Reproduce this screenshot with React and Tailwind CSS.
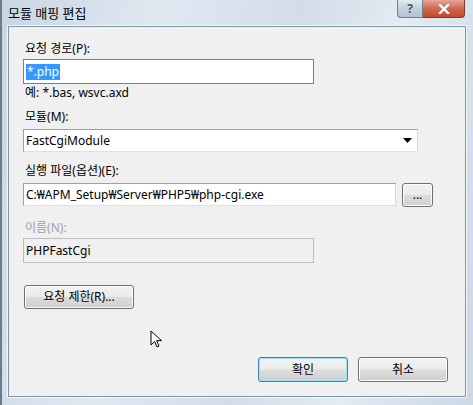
import React from "react";

const font = { fontFamily: '"Noto Sans", "Noto Sans CJK KR", sans-serif' };

function Btn({ children, className = "", focused = false }) {
  return (
    <div
      className={
        "flex items-center justify-center rounded-[3px] border text-[12px] text-black " +
        (focused
          ? "border-[#3c7fb1] shadow-[inset_0_0_0_1px_#9ee3fb] "
          : "border-[#707070] shadow-[inset_0_0_0_1px_#fcfcfc] ") +
        "bg-[linear-gradient(#f2f2f2_0%,#ebebeb_48%,#dddddd_52%,#cfcfcf_100%)] " +
        className
      }
    >
      {children}
    </div>
  );
}

export default function App() {
  return (
    <div
      style={font}
      className="relative flex h-[405px] w-[473px] flex-col overflow-hidden bg-[linear-gradient(100deg,#c9d6e2_0%,#dfe9f2_30%,#d2dde8_55%,#e3ebf3_75%,#cbd8e5_100%)] border-l-2 border-l-[#6a7b8c]"
    >
      {/* title bar */}
      <div className="flex h-[26px] items-start justify-between pl-[6px] pr-[8px]">
        <div className="mt-[4px] text-[13px] leading-[18px] text-black">모듈 매핑 편집</div>
        <div className="flex">
          <div className="flex h-[18px] w-[26px] items-center justify-center rounded-bl-[4px] border border-t-0 border-[#6f7f8f] bg-[linear-gradient(#e3ebf3,#c3d0dd_50%,#b5c4d3)] text-[12px] font-bold text-[#4a5866]">
            ?
          </div>
          <div className="flex h-[18px] w-[42px] items-center justify-center rounded-br-[4px] border border-l-0 border-t-0 border-[#7a3a2f] bg-[linear-gradient(#e8a596,#d0684f_50%,#c24a30)]">
            <svg width="12" height="10" viewBox="0 0 12 10">
              <path d="M2 1 L10 9 M10 1 L2 9" stroke="#ffffff" strokeWidth="2.4" strokeLinecap="square" />
            </svg>
          </div>
        </div>
      </div>

      {/* client area */}
      <div className="ml-[6px] mr-[7px] mb-[8px] flex flex-1 flex-col border border-[#7b95a9] bg-[#f0f0f0] shadow-[0_0_0_1px_#f4f8fb]">
        <div className="flex flex-1 flex-col pl-[14px] pt-[14px] text-[12px] leading-[16px] text-black">
          <div className="ml-[2px]">요청 경로(P):</div>
          <div className="mt-[2px] flex h-[25px] w-[291px] items-center border border-[#5d88ae] bg-white pl-[2px]">
            <span className="bg-[#3399ff] px-[1px] text-white">*.php</span>
          </div>
          <div className="ml-[2px] mt-[1px]">예: *.bas, wsvc.axd</div>
          <div className="ml-[2px] mt-[8px]">모듈(M):</div>
          <div className="mt-[4px] flex h-[23px] w-[395px] items-center justify-between border border-[#a0a0a0] border-b-[#e0e0e0] border-r-[#d8d8d8] bg-white pl-[2px] pr-[5px]">
            <span>FastCgiModule</span>
            <svg width="9" height="5" viewBox="0 0 9 5">
              <path d="M0 0 H9 L4.5 5 Z" fill="#000" />
            </svg>
          </div>
          <div className="ml-[2px] mt-[11px]">실행 파일(옵션)(E):</div>
          <div className="mt-[4px] flex items-start gap-[6px]">
            <div className="flex h-[23px] w-[373px] items-center border border-[#a0a0a0] border-b-[#e0e0e0] border-r-[#d8d8d8] bg-white pl-[2px]">
              C:₩APM_Setup₩Server₩PHP5₩php-cgi.exe
            </div>
            <Btn className="h-[24px] w-[31px] text-[10px] leading-[10px] text-[#555]">...</Btn>
          </div>
          <div className="ml-[2px] mt-[13px] text-[#a0a0a0]">이름(N):</div>
          <div className="mt-[2px] flex h-[25px] w-[291px] items-center border border-[#bdbdbd] bg-[#f0f0f0] pl-[2px]">
            PHPFastCgi
          </div>
          <Btn className="mt-[22px] ml-[1px] h-[24px] w-[110px]">요청 제한(R)...</Btn>
          <div className="flex-1" />
          <div className="mb-[14px] mr-[17px] flex justify-end gap-[10px]">
            <Btn focused className="h-[25px] w-[90px]">확인</Btn>
            <Btn className="h-[25px] w-[90px]">취소</Btn>
          </div>
        </div>
      </div>

      {/* mouse cursor */}
      <svg className="absolute left-[148px] top-[330px]" width="14" height="19" viewBox="0 0 14 19">
        <path d="M1 1 L1 15 L4.5 11.5 L7 17 L9 16 L6.6 10.6 L11.5 10.6 Z" fill="#fff" stroke="#000" strokeWidth="1" strokeLinejoin="round" />
      </svg>
    </div>
  );
}
